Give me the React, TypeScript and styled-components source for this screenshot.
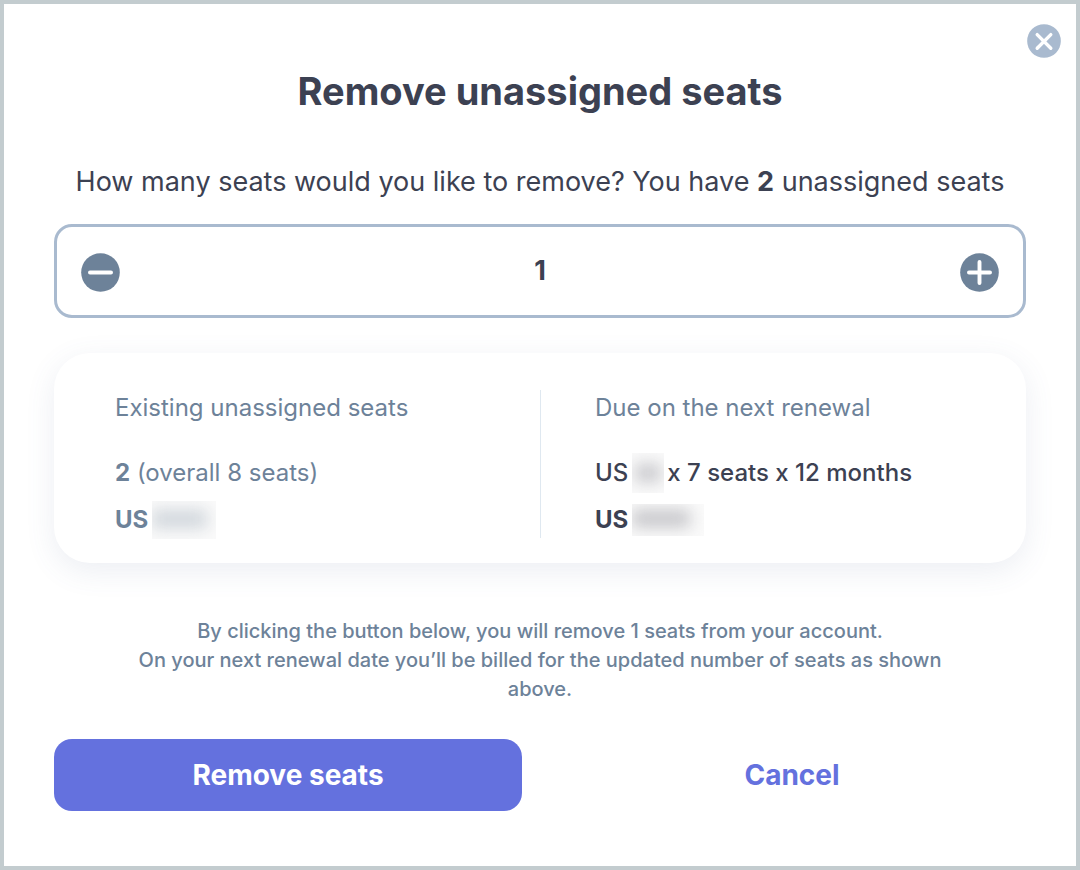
import React, { useState } from "react";
import styled, { createGlobalStyle } from "styled-components";

const color = {
  ink: "#3c4152",
  slate: "#6d8299",
  steel: "#a9bacf",
  indigo: "#6471de",
  frame: "#c3cccf",
};

const GlobalStyle = createGlobalStyle`
  *, *::before, *::after { box-sizing: border-box; }
  body {
    margin: 0;
    background: #fff;
    color: ${color.ink};
    font-family: Inter, "Liberation Sans", sans-serif;
  }
`;

const Dialog = styled.main`
  position: relative;
  min-height: 100vh;
  padding: 63px 50px 50px;
  border: 4px solid ${color.frame};
  background: #fff;
`;

const IconButton = styled.button`
  display: flex;
  flex: none;
  padding: 0;
  border: 0;
  border-radius: 50%;
  background: none;
  cursor: pointer;
`;

const CloseButton = styled(IconButton)`
  position: absolute;
  top: 20px;
  right: 15px;
`;

const Title = styled.h1`
  margin: 0 0 49px;
  font-size: 38px;
  line-height: 48px;
  font-weight: 700;
  text-align: center;
`;

const Question = styled.label`
  display: block;
  margin-bottom: 24px;
  font-size: 27px;
  line-height: 36px;
  text-align: center;
`;

const Stepper = styled.div`
  display: flex;
  align-items: center;
  height: 94px;
  margin-bottom: 35px;
  padding: 3px 24px 0;
  border: 3px solid ${color.steel};
  border-radius: 18px;
`;

const SeatInput = styled.input`
  flex: 1;
  min-width: 0;
  padding: 0 0 3px;
  border: 0;
  outline: 0;
  background: none;
  color: inherit;
  font: 700 27px/36px Inter, "Liberation Sans", sans-serif;
  text-align: center;
`;

const Summary = styled.section`
  display: grid;
  grid-template-columns: 1fr 1fr;
  margin-bottom: 54px;
  padding: 37px 0 25px;
  border-radius: 36px;
  background: #fff;
  box-shadow: 0 8px 30px rgba(80, 100, 150, 0.11);
`;

const Column = styled.div<{ $divided?: boolean }>`
  padding: 2px 0 2px ${(p) => (p.$divided ? 54 : 61)}px;
  border-left: ${(p) => (p.$divided ? "1px solid #dfe8f0" : "0")};
  color: ${(p) => (p.$divided ? color.ink : color.slate)};
`;

const Heading = styled.h2`
  margin: 0 0 33px;
  color: ${color.slate};
  font-size: 24px;
  line-height: 32px;
  font-weight: 400;
`;

const Line = styled.p<{ $weight?: number }>`
  display: flex;
  align-items: center;
  height: 32px;
  margin: 0 0 15px;
  font-size: 24px;
  line-height: 32px;
  font-weight: ${(p) => p.$weight ?? 400};
  white-space: pre;

  &:last-child { margin-bottom: 0; }
`;

const Redacted = styled.span<{ $width: number; $height: number; $tone: string; $inset: string }>`
  display: flex;
  flex: none;
  width: ${(p) => p.$width}px;
  height: ${(p) => p.$height}px;
  margin: 0 3px 0 4px;
  padding: ${(p) => p.$inset};
  overflow: hidden;
  background: #fafafa;

  &::before {
    content: "";
    flex: 1;
    background: ${(p) => p.$tone};
    filter: blur(8px);
  }
`;

const Note = styled.p`
  max-width: 840px;
  margin: 0 auto 35px;
  color: ${color.slate};
  font-size: 20px;
  line-height: 29px;
  font-weight: 500;
  text-align: center;
`;

const Actions = styled.div`
  display: grid;
  grid-template-columns: 1fr 1fr;
  gap: 36px;
`;

const ActionButton = styled.button<{ $primary?: boolean }>`
  height: 72px;
  padding: 0;
  border: 0;
  border-radius: 18px;
  background: ${(p) => (p.$primary ? color.indigo : "transparent")};
  color: ${(p) => (p.$primary ? "#fff" : color.indigo)};
  font: 700 28px/36px Inter, "Liberation Sans", sans-serif;
  cursor: pointer;
`;

function RoundIcon({ size, fill, path }: { size: number; fill: string; path: string }) {
  return (
    <svg width={size} height={size} viewBox="0 0 40 40" aria-hidden="true">
      <circle cx="20" cy="20" r="19.8" fill={fill} />
      <path d={path} fill="none" stroke="#fff" strokeWidth="4" strokeLinecap="round" />
    </svg>
  );
}

export default function App() {
  const [seats, setSeats] = useState(1);
  const available = 2;
  const change = (next: number) => setSeats(Math.min(available, Math.max(1, next || 1)));

  return (
    <>
      <GlobalStyle />
      <Dialog>
        <CloseButton type="button" aria-label="Close">
          <RoundIcon size={34} fill={color.steel} path="M12 12.5l16 16M28 12.5l-16 16" />
        </CloseButton>
        <Title>Remove unassigned seats</Title>
        <Question htmlFor="seats">
          How many seats would you like to remove? You have <strong>{available}</strong> unassigned seats
        </Question>
        <Stepper>
          <IconButton type="button" aria-label="Remove one seat" onClick={() => change(seats - 1)}>
            <RoundIcon size={39} fill={color.slate} path="M9.2 20h21.6" />
          </IconButton>
          <SeatInput
            id="seats"
            inputMode="numeric"
            value={seats}
            onChange={(e) => change(Number(e.target.value))}
          />
          <IconButton type="button" aria-label="Add one seat" onClick={() => change(seats + 1)}>
            <RoundIcon size={39} fill={color.slate} path="M9.2 20h21.6M20 9.2v21.6" />
          </IconButton>
        </Stepper>
        <Summary>
          <Column>
            <Heading>Existing unassigned seats</Heading>
            <Line><strong>2</strong> (overall 8 seats)</Line>
            <Line $weight={700}>
              US<Redacted $width={64} $height={38} $tone="#cfd5db" $inset="9px 9px 11px 0" />
            </Line>
          </Column>
          <Column $divided>
            <Heading>Due on the next renewal</Heading>
            <Line $weight={500}>
              US<Redacted $width={32} $height={40} $tone="#c8c8cc" $inset="11px 3px" />x {8 - seats} seats x 12 months
            </Line>
            <Line $weight={700}>
              US<Redacted $width={72} $height={32} $tone="#c4c4c8" $inset="6px 14px 9px 0" />
            </Line>
          </Column>
        </Summary>
        <Note>
          By clicking the button below, you will remove {seats} seats from your account.
          <br />
          On your next renewal date you’ll be billed for the updated number of seats as shown above.
        </Note>
        <Actions>
          <ActionButton type="button" $primary>Remove seats</ActionButton>
          <ActionButton type="button">Cancel</ActionButton>
        </Actions>
      </Dialog>
    </>
  );
}
